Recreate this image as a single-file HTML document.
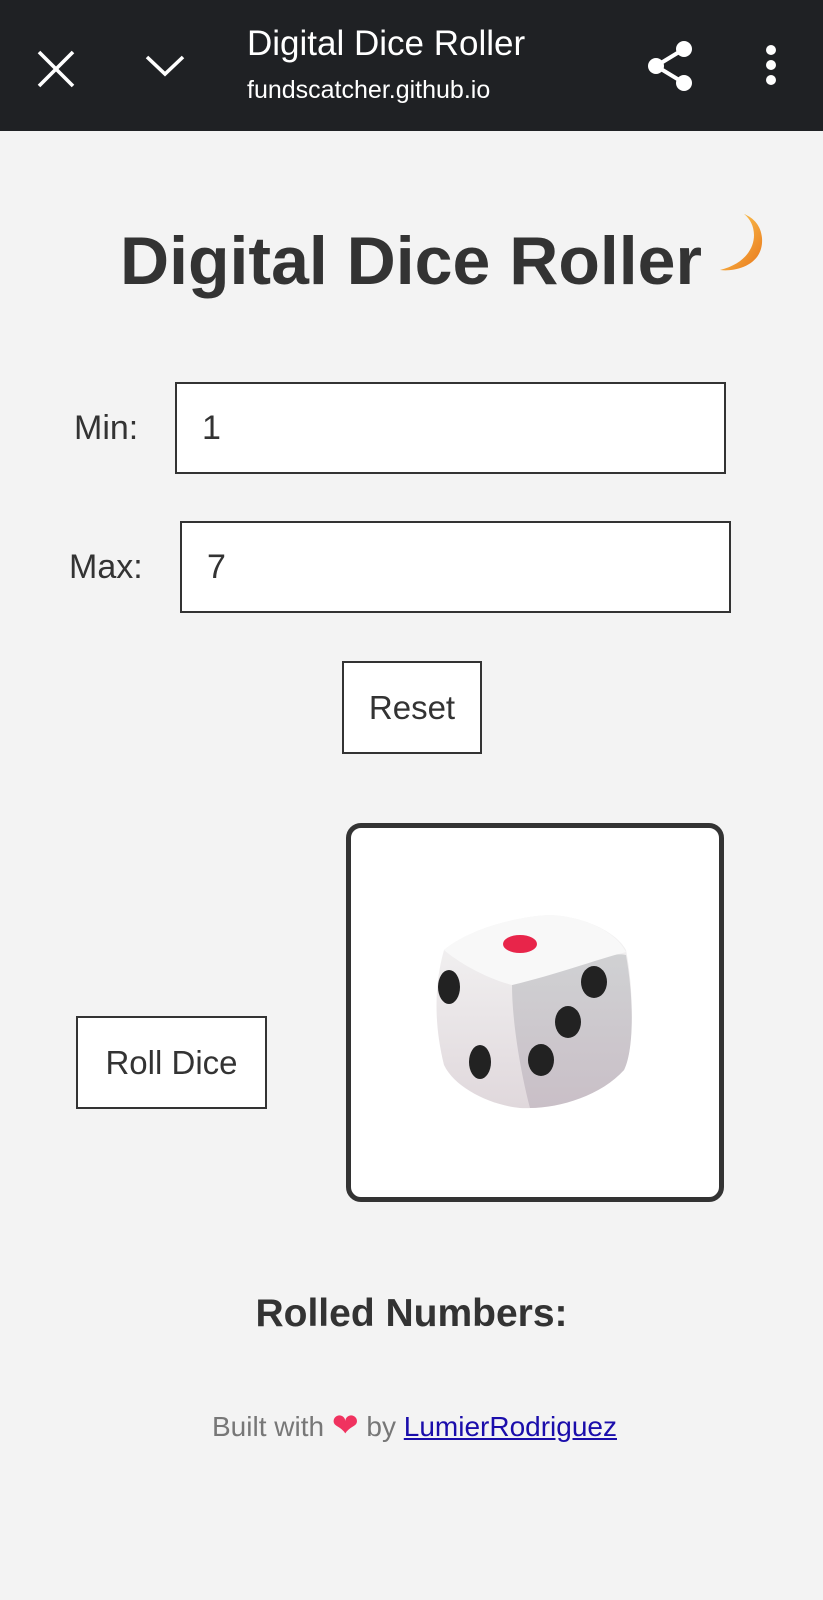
<!DOCTYPE html>
<html><head><meta charset="utf-8"><style>
*{margin:0;padding:0;box-sizing:border-box}
body{width:823px;height:1600px;background:#f3f3f3;font-family:"Liberation Sans",sans-serif;color:#333;position:relative;overflow:hidden}
.hdr{position:absolute;left:0;top:0;width:823px;height:131px;background:#1f2124;color:#fff}
.abs{position:absolute}
.box{position:absolute;background:#fff;border:2px solid #333}
</style></head><body>
<div class="hdr">
<svg class="abs" style="left:36px;top:49px" width="40" height="40" viewBox="0 0 40 40"><path d="M3 3L37 37M37 3L3 37" stroke="#fff" stroke-width="3.6"/></svg>
<svg class="abs" style="left:144px;top:52px" width="42" height="28" viewBox="0 0 42 28"><path d="M3 5L21 22L39 5" stroke="#fff" stroke-width="3.6" fill="none"/></svg>
<div class="abs" style="left:247px;top:24px;font-size:35px">Digital Dice Roller</div>
<div class="abs" style="left:247px;top:76px;font-size:25px">fundscatcher.github.io</div>
<svg class="abs" style="left:646px;top:40px" width="48" height="52" viewBox="0 0 48 52"><path d="M38 9L10 26L38 43" stroke="#fff" stroke-width="4" fill="none"/><circle cx="38" cy="9" r="8" fill="#fff"/><circle cx="10" cy="26" r="8" fill="#fff"/><circle cx="38" cy="43" r="8" fill="#fff"/></svg>
<svg class="abs" style="left:763px;top:44px" width="16" height="42" viewBox="0 0 16 42"><circle cx="8" cy="6" r="5" fill="#fff"/><circle cx="8" cy="21" r="5" fill="#fff"/><circle cx="8" cy="36" r="5" fill="#fff"/></svg>
</div>
<div class="abs" style="left:120px;top:222px;font-size:68px;font-weight:bold;white-space:nowrap">Digital Dice Roller</div>
<svg class="abs" style="left:716px;top:210px" width="52" height="66" viewBox="0 0 52 66"><defs><linearGradient id="m" x1="0" y1="0" x2="1" y2="1"><stop offset="0" stop-color="#ffd45a"/><stop offset="1" stop-color="#e8751a"/></linearGradient></defs><path d="M28 4C44 16 44 50 4 60C18 62 48 56 46 28C45 16 38 8 28 4Z" fill="url(#m)"/></svg>
<div class="abs" style="left:74px;top:409px;font-size:34px">Min:</div>
<div class="box" style="left:175px;top:382px;width:551px;height:92px"><span class="abs" style="left:25px;top:25px;font-size:34px">1</span></div>
<div class="abs" style="left:69px;top:548px;font-size:34px">Max:</div>
<div class="box" style="left:180px;top:521px;width:551px;height:92px"><span class="abs" style="left:25px;top:25px;font-size:34px">7</span></div>
<div class="box" style="left:342px;top:661px;width:140px;height:93px;font-size:33px;text-align:center;line-height:89px">Reset</div>
<div class="box" style="left:76px;top:1016px;width:191px;height:93px;font-size:33px;text-align:center;line-height:89px;white-space:nowrap">Roll Dice</div>
<div class="abs" style="left:346px;top:823px;width:378px;height:379px;background:#fff;border:5px solid #333;border-radius:15px"></div>
<svg class="abs" style="left:430px;top:910px" width="206" height="205" viewBox="0 0 206 205">
<defs><linearGradient id="lf" x1="0" y1="0" x2="0" y2="1"><stop offset="0" stop-color="#f4f4f4"/><stop offset="1" stop-color="#e0d8dc"/></linearGradient><linearGradient id="rf" x1="0" y1="0" x2="0" y2="1"><stop offset="0" stop-color="#d0d1d3"/><stop offset="1" stop-color="#c9bfc7"/></linearGradient></defs>
<path d="M14 40C40 18 90 6 120 5C150 6 185 20 196 40C204 80 204 140 194 160C170 185 120 200 90 198C60 195 25 178 14 155C4 115 4 75 14 40Z" fill="url(#lf)"/>
<path d="M82 75C120 65 175 40 196 45C204 90 204 140 194 160C172 185 130 198 100 198C90 160 82 110 82 75Z" fill="url(#rf)"/>
<path d="M14 40C40 18 90 6 120 5C150 6 185 20 196 42C165 50 125 65 82 75C55 68 28 52 14 40Z" fill="#f8f8f8"/>
<ellipse cx="90" cy="34" rx="17" ry="9" fill="#e8254a"/>
<ellipse cx="19" cy="77" rx="11" ry="17" fill="#222"/><ellipse cx="50" cy="152" rx="11" ry="17" fill="#222"/>
<ellipse cx="164" cy="72" rx="13" ry="16" fill="#222"/><ellipse cx="138" cy="112" rx="13" ry="16" fill="#222"/><ellipse cx="111" cy="150" rx="13" ry="16" fill="#222"/>
</svg>
<div class="abs" style="left:0;width:823px;top:1292px;text-align:center;font-size:39px;font-weight:bold">Rolled Numbers:</div>
<div class="abs" style="left:212px;top:1406px;font-size:28px;color:#777;white-space:nowrap">Built with <span style="color:#f0325f;font-size:32px">&#10084;</span> by <span style="color:#1a0dab;text-decoration:underline">LumierRodriguez</span></div>
</body></html>
